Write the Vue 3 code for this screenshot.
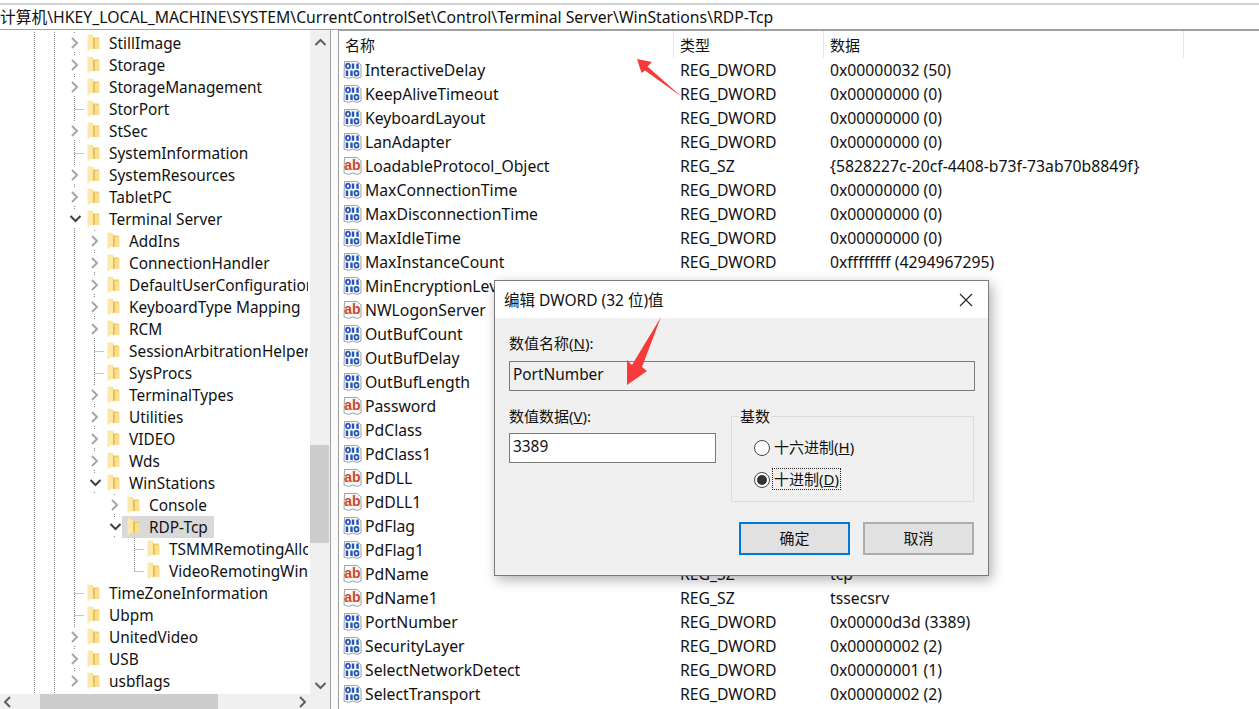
<script setup>
const treeData = [
  ['StillImage', 0, 'c'], ['Storage', 0, 'c'], ['StorageManagement', 0, 'c'], ['StorPort', 0, 'l'],
  ['StSec', 0, 'c'], ['SystemInformation', 0, 'l'], ['SystemResources', 0, 'c'], ['TabletPC', 0, 'c'],
  ['Terminal Server', 0, 'o'], ['AddIns', 1, 'c'], ['ConnectionHandler', 1, 'c'], ['DefaultUserConfiguration', 1, 'c'],
  ['KeyboardType Mapping', 1, 'c'], ['RCM', 1, 'c'], ['SessionArbitrationHelper', 1, 'l'], ['SysProcs', 1, 'l'],
  ['TerminalTypes', 1, 'c'], ['Utilities', 1, 'c'], ['VIDEO', 1, 'c'], ['Wds', 1, 'c'],
  ['WinStations', 1, 'o'], ['Console', 2, 'c'], ['RDP-Tcp', 2, 'o'], ['TSMMRemotingAllowed', 3, 'l'],
  ['VideoRemotingWindowNames', 3, 'l'], ['TimeZoneInformation', 0, 'l'], ['Ubpm', 0, 'l'], ['UnitedVideo', 0, 'c'],
  ['USB', 0, 'c'], ['usbflags', 0, 'c']
]
const rowH = 22
const tree = treeData.map(([name, level, kind]) => ({ name, level, kind, selected: name === 'RDP-Tcp', indent: 66 + level * 20 }))

function continues(i, level) {
  for (let j = i + 1; j < tree.length; j++) {
    if (tree[j].level < level) return false
    if (tree[j].level === level) return true
  }
  return false
}

const guides = []
tree.forEach((r, i) => {
  const top = i * rowH
  const mid = top + 11
  const bottom = top + rowH
  for (let k = 0; k < r.level; k++) {
    if (continues(i, k)) guides.push({ x1: 74.5 + k * 20, y1: top, x2: 74.5 + k * 20, y2: bottom })
  }
  const x = 74.5 + r.level * 20
  if (r.kind === 'l') {
    guides.push({ x1: x, y1: top, x2: x, y2: continues(i, r.level) ? bottom : mid })
    guides.push({ x1: x, y1: mid + 0.5, x2: x + 9, y2: mid + 0.5 })
  } else {
    guides.push({ x1: x, y1: top, x2: x, y2: top + 2 })
    if (continues(i, r.level) || r.kind === 'o') guides.push({ x1: x, y1: bottom - 2, x2: x, y2: bottom })
  }
})
guides.push({ x1: 34.5, y1: 0, x2: 34.5, y2: 664 }, { x1: 54.5, y1: 0, x2: 54.5, y2: 664 })

const D = 'REG_DWORD'
const S = 'REG_SZ'
const values = [
  ['InteractiveDelay', D, '0x00000032 (50)'],
  ['KeepAliveTimeout', D, '0x00000000 (0)'],
  ['KeyboardLayout', D, '0x00000000 (0)'],
  ['LanAdapter', D, '0x00000000 (0)'],
  ['LoadableProtocol_Object', S, '{5828227c-20cf-4408-b73f-73ab70b8849f}'],
  ['MaxConnectionTime', D, '0x00000000 (0)'],
  ['MaxDisconnectionTime', D, '0x00000000 (0)'],
  ['MaxIdleTime', D, '0x00000000 (0)'],
  ['MaxInstanceCount', D, '0xffffffff (4294967295)'],
  ['MinEncryptionLevel', D, '0x00000002 (2)'],
  ['NWLogonServer', S, ''],
  ['OutBufCount', D, '0x00000006 (6)'],
  ['OutBufDelay', D, '0x00000064 (100)'],
  ['OutBufLength', D, '0x00000212 (530)'],
  ['Password', S, ''],
  ['PdClass', D, '0x00000002 (2)'],
  ['PdClass1', D, '0x0000000b (11)'],
  ['PdDLL', S, 'tdtcp'],
  ['PdDLL1', S, 'tssecsrv'],
  ['PdFlag', D, '0x0000004e (78)'],
  ['PdFlag1', D, '0x00000000 (0)'],
  ['PdName', S, 'tcp'],
  ['PdName1', S, 'tssecsrv'],
  ['PortNumber', D, '0x00000d3d (3389)'],
  ['SecurityLayer', D, '0x00000002 (2)'],
  ['SelectNetworkDetect', D, '0x00000001 (1)'],
  ['SelectTransport', D, '0x00000002 (2)']
].map(([name, type, data]) => ({ name, type, data, isText: type === S }))
</script>

<template>
  <div class="screen">
    <div class="address">计算机\HKEY_LOCAL_MACHINE\SYSTEM\CurrentControlSet\Control\Terminal Server\WinStations\RDP-Tcp</div>

    <div class="main">
      <div class="tree-pane">
        <div class="tree-top">
          <div class="tree-view">
            <svg class="guides" width="310" height="664">
              <line v-for="(g, i) in guides" :key="i" :x1="g.x1" :y1="g.y1" :x2="g.x2" :y2="g.y2" stroke="#8a8a8a" stroke-width="1" stroke-dasharray="1 1" />
            </svg>
            <div v-for="r in tree" :key="r.name" class="tree-row" :style="{ paddingLeft: r.indent + 'px' }">
              <span class="twisty">
                <svg v-if="r.kind === 'c'" width="10" height="14" viewBox="0 0 10 14"><path d="M2 2 L7 7 L2 12" fill="none" stroke="#a6a6a6" stroke-width="2" /></svg>
                <svg v-else-if="r.kind === 'o'" width="13" height="10" viewBox="0 0 13 10"><path d="M1.5 2 L6.5 7 L11.5 2" fill="none" stroke="#404040" stroke-width="2" /></svg>
              </span>
              <span class="node" :class="{ selected: r.selected }">
                <svg class="folder" width="13" height="18" viewBox="0 0 13 18">
                  <path d="M2 1 H5.5 L6.5 3.5 H12 V14.5 H2 Z" fill="#f3cd67" />
                  <path d="M8 5 H12.5 V15 H8 Z" fill="#fbdf8e" />
                  <path d="M0.5 0.5 H4 L6.5 3.5 V15 H4 L0.5 17.5 Z" fill="#fce9a9" />
                  <path d="M6 3.5 H7.5 V15 H6 Z" fill="#e9bd52" />
                </svg>
                <span class="node-label">{{ r.name }}</span>
              </span>
            </div>
          </div>
          <div class="vscroll">
            <svg width="20" height="24" viewBox="0 0 20 24"><path d="M5.5 15 L10.5 10 L15.5 15" fill="none" stroke="#606060" stroke-width="2" /></svg>
            <div class="vthumb"></div>
            <svg class="vdown" width="20" height="24" viewBox="0 0 20 24"><path d="M5.5 10 L10.5 15 L15.5 10" fill="none" stroke="#606060" stroke-width="2" /></svg>
          </div>
        </div>
        <div class="hscroll">
          <svg width="16" height="15" viewBox="0 0 16 15"><path d="M10 3 L5 8 L10 13" fill="none" stroke="#606060" stroke-width="2" /></svg>
          <div class="hthumb"></div>
          <svg width="16" height="15" viewBox="0 0 16 15"><path d="M6 3 L11 8 L6 13" fill="none" stroke="#606060" stroke-width="2" /></svg>
        </div>
      </div>

      <div class="splitter"></div>

      <div class="list-pane">
        <div class="list-head">
          <div class="col-name head-cell">名称</div>
          <div class="col-type head-cell">类型</div>
          <div class="col-data head-cell">数据</div>
        </div>
        <div v-for="v in values" :key="v.name" class="list-row">
          <div class="col-name name-cell">
            <svg class="reg-icon" width="19" height="18" viewBox="0 0 19 18">
              <path d="M1.5 0.5 H14.5 L18 4 V16 L14 17.5 L10 16 L5.5 17.5 L1 16 Z" fill="#f6f8fb" stroke="#a3a3a3" />
              <template v-if="v.isText">
                <text x="9.5" y="12.6" text-anchor="middle" class="ab">ab</text>
              </template>
              <g v-else fill="none" stroke="#2458b8">
                <ellipse cx="5" cy="5" rx="2" ry="2.4" stroke-width="1.8" />
                <path d="M10 2.5 V7.8 M14.5 2.5 V7.8" stroke-width="2.4" />
                <path d="M4 9.5 V15 M8.5 9.5 V15" stroke-width="2.4" />
                <ellipse cx="13.5" cy="12.2" rx="2" ry="2.4" stroke-width="1.8" />
              </g>
            </svg>
            <span>{{ v.name }}</span>
          </div>
          <div class="col-type">{{ v.type }}</div>
          <div class="col-data">{{ v.data }}</div>
        </div>
      </div>
    </div>

    <svg class="arrow arrow-a" width="60" height="50" viewBox="0 0 60 50">
      <path d="M2 4 L17 7 L12.5 11.5 L47 42 L10 15.5 L6.5 18 Z" fill="#f73a3a" />
    </svg>

    <div class="dialog">
      <div class="dialog-title">
        <span class="dialog-caption">编辑 DWORD (32 位)值</span>
        <svg width="14" height="14" viewBox="0 0 14 14"><path d="M1 1 L13 13 M13 1 L1 13" stroke="#222" stroke-width="1.1" fill="none" /></svg>
      </div>
      <div class="dialog-body">
        <div class="label">数值名称(<u>N</u>):</div>
        <div class="field field-wide">PortNumber</div>
        <div class="lower">
          <div class="left-col">
            <div class="label">数值数据(<u>V</u>):</div>
            <div class="field field-white">3389</div>
          </div>
          <fieldset class="base-group">
            <legend>基数</legend>
            <div class="radio-line">
              <span class="radio"></span>
              <span class="radio-text">十六进制(<u>H</u>)</span>
            </div>
            <div class="radio-line">
              <span class="radio checked"></span>
              <span class="radio-text focused">十进制(<u>D</u>)</span>
            </div>
          </fieldset>
        </div>
        <div class="buttons">
          <div class="btn primary">确定</div>
          <div class="btn">取消</div>
        </div>
      </div>
    </div>

    <svg class="arrow arrow-b" width="40" height="72" viewBox="0 0 40 72">
      <path d="M35 1 L16 51 L21 55 L1 69 L1 44 L6 49 Z" fill="#f73a3a" />
    </svg>
  </div>
</template>

<style scoped>
.screen {
  position: relative;
  width: 1259px;
  height: 709px;
  overflow: hidden;
  background: #fff;
  color: #111;
  font-family: "Noto Sans", "Noto Sans CJK SC", sans-serif;
  font-size: 15.75px;
  padding-top: 3px;
  box-sizing: border-box;
}
.address {
  height: 24px;
  line-height: 24px;
  font-size: 15.75px;
  border-top: 2px solid #d0d0d0;
  border-bottom: 1px solid #a0a0a0;
  white-space: nowrap;
  overflow: hidden;
}
.main {
  display: flex;
  height: 679px;
}
.tree-pane {
  width: 330px;
  flex: none;
  display: flex;
  flex-direction: column;
  border-right: 1px solid #a0a0a0;
  font-size: 15.4px;
}
.tree-top {
  display: flex;
  height: 664px;
  flex: none;
}
.tree-view {
  position: relative;
  width: 308px;
  margin-right: 2px;
  flex: none;
  padding-top: 2px;
  overflow: hidden;
  box-sizing: border-box;
}
.guides {
  position: absolute;
  left: 0;
  top: 2px;
}
.tree-row {
  position: relative;
  height: 22px;
  display: flex;
  align-items: center;
  white-space: nowrap;
  box-sizing: border-box;
}
.twisty {
  width: 16px;
  flex: none;
  display: flex;
  justify-content: center;
  margin-left: 1px;
  margin-right: 4px;
}
.node {
  display: flex;
  align-items: center;
  height: 22px;
  flex: none;
}
.node.selected {
  background: #d9d9d9;
  margin-left: -5px;
  padding-left: 5px;
  padding-right: 6px;
}
.folder {
  margin-right: 9px;
  flex: none;
}
.vscroll {
  width: 20px;
  background: #f0f0f0;
  display: flex;
  flex-direction: column;
  height: 679px;
  position: relative;
  flex: none;
}
.vthumb {
  width: 19px;
  height: 98px;
  margin-top: 391px;
  background: #cdcdcd;
}
.vdown {
  margin-top: 130px;
}
.hscroll {
  width: 310px;
  height: 15px;
  background: #f0f0f0;
  display: flex;
  justify-content: space-between;
}
.hthumb {
  width: 178px;
  margin-left: 24px;
  margin-right: 76px;
  background: #cdcdcd;
}
.splitter {
  width: 7px;
  flex: none;
  background: #fafafa;
}
.list-pane {
  flex: 1;
  min-width: 0;
  border-left: 1px solid #a0a0a0;
  border-top: 1px solid #a0a0a0;
  overflow: hidden;
}
.list-head {
  display: flex;
  height: 27px;
  font-size: 15px;
  line-height: 29px;
}
.head-cell {
  border-right: 1px solid #e5e5e5;
  box-sizing: border-box;
}
.list-row {
  display: flex;
  height: 24px;
  line-height: 24px;
  white-space: nowrap;
}
.col-name {
  width: 335px;
  flex: none;
  padding-left: 6px;
  box-sizing: border-box;
}
.col-type {
  width: 150px;
  flex: none;
  padding-left: 6px;
  box-sizing: border-box;
}
.col-data {
  width: 360px;
  flex: none;
  padding-left: 6px;
  box-sizing: border-box;
}
.list-row .col-data {
  width: auto;
}
.name-cell {
  display: flex;
  align-items: center;
  padding-left: 4px;
}
.reg-icon {
  margin-right: 3px;
  flex: none;
}
.ab {
  font-family: "Liberation Sans", sans-serif;
  font-size: 14px;
  font-weight: 700;
  fill: #cf4a25;
}
.arrow {
  position: absolute;
}
.arrow-a {
  left: 635px;
  top: 55px;
}
.arrow-b {
  left: 626px;
  top: 316px;
}
.dialog {
  position: absolute;
  left: 494px;
  top: 280px;
  width: 495px;
  height: 296px;
  box-sizing: border-box;
  border: 1px solid #7a7a7a;
  background: #f0f0f0;
  box-shadow: 3px 4px 12px rgba(0, 0, 0, 0.3);
  display: flex;
  flex-direction: column;
  font-size: 15.4px;
}
.dialog-title {
  height: 37px;
  flex: none;
  background: #fff;
  display: flex;
  align-items: center;
  justify-content: space-between;
  padding: 0 15px 0 9px;
  font-size: 15.5px;
}
.dialog-caption {
  line-height: 20px;
}
.dialog-body {
  flex: 1;
  padding: 14px 13px 0 14px;
}
.label {
  font-size: 15px;
  line-height: 22px;
  height: 22px;
}
.field {
  height: 30px;
  line-height: 26px;
  box-sizing: border-box;
  border: 1px solid #7a7a7a;
  padding-left: 3px;
}
.field-wide {
  width: 466px;
  margin-top: 7px;
}
.field-white {
  width: 207px;
  margin-top: 6px;
  background: #fff;
}
.lower {
  display: flex;
  margin-top: 14px;
  gap: 15px;
}
.left-col {
  width: 207px;
  flex: none;
}
.base-group {
  width: 243px;
  height: 86px;
  margin: 11px 0 0;
  padding: 0;
  box-sizing: border-box;
  border: 1px solid #dcdcdc;
  position: relative;
  flex: none;
}
.base-group legend {
  position: absolute;
  left: 7px;
  top: -11px;
  padding: 0 1px;
  background: #f0f0f0;
  font-size: 15px;
  line-height: 20px;
}
.radio-line {
  display: flex;
  align-items: center;
  height: 22px;
  padding-left: 22px;
  margin-bottom: 10px;
  font-size: 15px;
}
.radio-line:first-of-type {
  margin-top: 20px;
}
.radio {
  width: 16px;
  height: 16px;
  box-sizing: border-box;
  border: 1px solid #444;
  border-radius: 50%;
  background: #fff;
  flex: none;
  margin-right: 2px;
  position: relative;
}
.radio.checked::after {
  content: "";
  position: absolute;
  left: 2px;
  top: 2px;
  width: 10px;
  height: 10px;
  border-radius: 50%;
  background: #333;
}
.radio-text {
  line-height: 20px;
  padding: 0 1px;
  margin-bottom: 2px;
  border: 1px dotted transparent;
}
.radio-text.focused {
  border-color: #222;
}
.buttons {
  display: flex;
  justify-content: flex-end;
  gap: 13px;
  margin-top: 20px;
  padding-right: 1px;
}
.btn {
  width: 111px;
  height: 33px;
  box-sizing: border-box;
  border: 2px solid #adadad;
  background: #e1e1e1;
  display: flex;
  align-items: center;
  justify-content: center;
  font-size: 15px;
  padding-bottom: 2px;
}
.btn.primary {
  border-color: #0078d7;
}
</style>
